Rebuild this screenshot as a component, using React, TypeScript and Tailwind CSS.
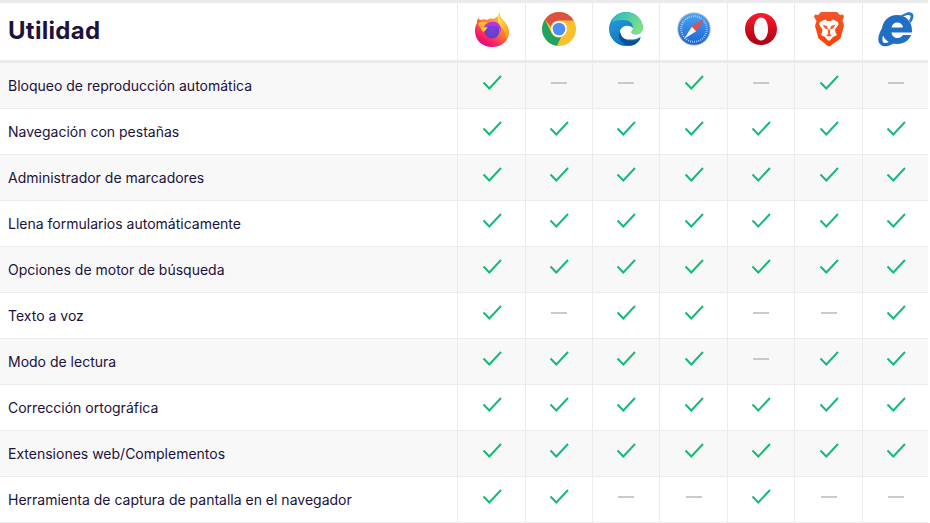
const features: [string, string][] = [
  ["Bloqueo de reproducción automática", "1001010"],
  ["Navegación con pestañas", "1111111"],
  ["Administrador de marcadores", "1111111"],
  ["Llena formularios automáticamente", "1111111"],
  ["Opciones de motor de búsqueda", "1111111"],
  ["Texto a voz", "1011001"],
  ["Modo de lectura", "1111011"],
  ["Corrección ortográfica", "1111111"],
  ["Extensiones web/Complementos", "1111111"],
  ["Herramienta de captura de pantalla en el navegador", "1100100"],
];

function Firefox() {
  return (
    <svg width="38" height="38" viewBox="0 0 38 38">
      <defs>
        <linearGradient id="ffBase" x1="0.8" y1="0.1" x2="0.2" y2="1">
          <stop offset="0" stopColor="#ffbd4f" />
          <stop offset="0.45" stopColor="#ff7139" />
          <stop offset="0.8" stopColor="#f5156c" />
          <stop offset="1" stopColor="#c5127f" />
        </linearGradient>
        <linearGradient id="ffTop" x1="0.3" y1="0" x2="0.7" y2="1">
          <stop offset="0" stopColor="#fff44f" />
          <stop offset="1" stopColor="#ff980e" />
        </linearGradient>
        <radialGradient id="ffBall" cx="0.55" cy="0.4" r="0.7">
          <stop offset="0" stopColor="#7a3fe0" />
          <stop offset="1" stopColor="#5a3ec0" />
        </radialGradient>
      </defs>
      <path d="M27 1c-1 3 0 6 3 9 3 3 6 7 6 12 0 9-7.500 15-17 15C9 37 2 30 2 21c0-3 .5-6 2-8 0-2 0-3 1.500-5 .5 1 1.500 2 2.500 2 2-1 4-1 6 0 1-1 4-2 6-1 3-1 6-3 7-8z" fill="url(#ffBase)" />
      <path d="M26 1c-1 5 1 7 4 10 3 3 5.500 7 5.500 11.500 0 3-1 5.500-2.500 7.500.5-5-1-9-4-12-3-3-6-7-3-17z" fill="url(#ffTop)" />
      <path d="M5 14c3-3 7-3 10-1-3 1-4 2-3 3l-3 3c-2-1-3-3-4-5z" fill="#ffb52e" />
      <circle cx="19" cy="21" r="7.500" fill="url(#ffBall)" />
      <path d="M11 17c2-4 7-6 11-5 4 1 7 5 6 10-1-4-4-6-7-6-3 0-7 0-10 1z" fill="#b833e1" />
      <path d="M8 18l7-1c-1 1-2 2-2 3l-3 2z" fill="#ffd23c" />
    </svg>
  );
}

function Chrome() {
  return (
    <svg width="34" height="34" viewBox="0 0 34 34">
      <circle cx="17" cy="17" r="17" fill="#fbc02d" />
      <path d="M17 0a17 17 0 0 1 14.700 8.500H17a8.500 8.500 0 0 0-8.200 6.300L2.900 7.500A17 17 0 0 1 17 0z" fill="#dd5044" />
      <path d="M2.900 7.500l6.700 13.800a8.500 8.500 0 0 0 9.400 4l-4 8.500A17 17 0 0 1 2.900 7.500z" fill="#1da462" />
      <circle cx="17" cy="17" r="8" fill="#fff" />
      <circle cx="17" cy="17" r="6.300" fill="#4e8df5" />
    </svg>
  );
}

function Edge() {
  return (
    <svg width="34" height="34" viewBox="0 0 34 34">
      <defs>
        <linearGradient id="edgeA" x1="0" y1="0" x2="0.6" y2="1">
          <stop offset="0" stopColor="#2aa5dc" />
          <stop offset="1" stopColor="#0b6cc0" />
        </linearGradient>
        <linearGradient id="edgeB" x1="0" y1="0" x2="1" y2="0.6">
          <stop offset="0" stopColor="#25b5cf" />
          <stop offset="1" stopColor="#7fe27f" />
        </linearGradient>
      </defs>
      <circle cx="17" cy="17" r="17" fill="url(#edgeA)" />
      <path d="M2.500 10C6 3.500 11 0 17 0c10 0 17 8 17 16.500 0 3.500-3 6-7 6-3 0-5-1.500-5-2.500 1-1 2-2.500 2-4 0-5-4-8-9-8-5 0-10 .5-12.500 2z" fill="url(#edgeB)" />
      <path d="M34 17c-.5 3-3.500 5.500-7 5.500-3 0-5-1.500-5-2.500 1-1 2-2.500 2-4-3-2.500-7-3-10-1-3 2-4 5-3 9 3 3 8 4 13 3.500 3-.3 5-1 6-2l6-1V17z" fill="#fff" />
      <path d="M11 19C8 25 12 32 20 33.500c5 1 9-2.500 11.500-7-3.500 2-7.500 2.500-11.500 2-5-.5-8.500-4.500-9-9.500z" fill="#0c4f96" />
    </svg>
  );
}

function Safari() {
  return (
    <svg width="34" height="34" viewBox="0 0 34 34">
      <defs>
        <linearGradient id="safBg" x1="0" y1="0" x2="0" y2="1">
          <stop offset="0" stopColor="#4ea4ee" />
          <stop offset="1" stopColor="#1a62d6" />
        </linearGradient>
      </defs>
      <circle cx="17" cy="17" r="16.800" fill="#c4c8d0" />
      <circle cx="17" cy="17" r="15.800" fill="url(#safBg)" />
      <circle cx="17" cy="17" r="12.800" fill="none" stroke="#b9dcf8" strokeWidth="2" strokeDasharray="0.800 1.300" />
      <path d="M27 6.500L14.800 14.800 19.200 19.200z" fill="#f0493e" />
      <path d="M7 27L14.800 14.800 19.200 19.200z" fill="#f2f2f2" />
    </svg>
  );
}

function Opera() {
  return (
    <svg width="34" height="34" viewBox="0 0 34 34">
      <defs>
        <linearGradient id="opA" x1="0" y1="0" x2="0" y2="1">
          <stop offset="0" stopColor="#ff1b2d" />
          <stop offset="1" stopColor="#a70014" />
        </linearGradient>
      </defs>
      <path fillRule="evenodd" d="M17 1C8 1 1 8 1 17c0 9 7 16 16 16 9 0 16-7 16-16C33 8 26 1 17 1zm0 4.500c4 0 7 5 7 11.500s-3 11.500-7 11.500S10 23.500 10 17s3-11.500 7-11.500z" fill="url(#opA)" />
    </svg>
  );
}

function Brave() {
  return (
    <svg width="32" height="36" viewBox="0 0 32 36">
      <defs>
        <linearGradient id="brA" x1="0" y1="0" x2="0" y2="1">
          <stop offset="0" stopColor="#f1562b" />
          <stop offset="1" stopColor="#ff4000" />
        </linearGradient>
      </defs>
      <path d="M8 1h16l3 3 3-.500 1 2-1.500 4 1.500 5-3.500 13L17 35l-1 .5-1-.5-9.500-7.500L2 15l1.500-5L1 6l1-2.500L5 4z" fill="url(#brA)" />
      <path d="M7 11l5-2.500 2.500 1.500h3L20 8.500l5 2.500.5 2.500-3.500 5 .5 3 1.500 2.500-4 2-3 3.500h-2l-3-3.500-4-2L9 21.500l.5-3-3.500-5z" fill="#fff" />
      <path d="M9.500 13.500l4.500 1.500 1 3.500-3-1zM22.500 13.500l-4.500 1.500-1 3.500 3-1z" fill="#ff5a1f" />
      <path d="M15 18.500v4.500l-2 1.500 3 1 3-1-2-1.500v-4.500z" fill="#ff5a1f" />
    </svg>
  );
}

function InternetExplorer() {
  return (
    <svg width="36" height="36" viewBox="0 0 36 36">
      <path fillRule="evenodd" d="M19 4c9 0 15 6.500 15 15.500 0 .8 0 1.500-.1 2H13.500c.3 3.500 3 5.500 6 5.500 2.500 0 4.200-1 5.500-3h8c-2 5.500-7 9-13.500 9C10 33 4 27 4 19S10 4 19 4zm-5.500 12.500h11.500c-.3-3-2.500-5-5.700-5s-5.300 2-5.800 5z" fill="#1f6fc4" />
      <path d="M29 1.500c4-1 6.500.5 6.500 3.500 0 2.500-1.500 5-3 7-.5-1-1-2-1.500-2.500 1.200-2 2-4 1.200-5-1-1.200-4-.5-7.700 1.200-1-.3-1.500-.5-2.500-.5 2.500-1.500 5-3 7-3.700z" fill="#2a78c8" />
      <path d="M6.500 13C2.500 19-.5 25 .5 30c.7 4 4.500 6 9 5 2.500-.5 5-1.800 7-3.200-1.500-.1-3-.5-4.500-1.200-2 1-4.500 1.800-6 1.200C3.500 31 4 25 7.500 18.500z" fill="#1f6fc4" />
    </svg>
  );
}

const browsers = [Firefox, Chrome, Edge, Safari, Opera, Brave, InternetExplorer];

function Check() {
  return (
    <svg width="20" height="15" viewBox="0 0 20 15" fill="none">
      <path d="M1.500 7.500L7.300 13.500 19 1" stroke="#17b978" strokeWidth="2" />
    </svg>
  );
}

function Dash() {
  return <div className="h-[2px] w-4 bg-[#c9c9d0]" />;
}

export default function App() {
  return (
    <div className="w-[928px] font-['Inter',sans-serif] text-[#20123a]">
      <div className="grid h-[60px] grid-cols-[457px_68px_67px_67px_68px_67px_68px_1fr] border-t-[3px] border-[#ebebee] bg-white">
        <h2 className="flex items-center pb-[1px] pl-2 text-2xl font-bold tracking-[0.3px]">Utilidad</h2>
        {browsers.map((Icon, i) => (
          <div key={i} className="flex items-center justify-center border-l border-[#ececee] pb-[5px]">
            <Icon />
          </div>
        ))}
      </div>
      <div className="border-t-[3px] border-[#ebebee]">
        {features.map(([label, marks], r) => (
          <div
            key={label}
            className={`grid h-[46px] grid-cols-[457px_68px_67px_67px_68px_67px_68px_1fr] border-b border-[#ececee] ${r % 2 === 0 ? "bg-[#f8f8f9]" : "bg-white"}`}
          >
            <div className="flex items-center pl-2 text-sm">{label}</div>
            {marks.split("").map((m, i) => (
              <div key={i} className="flex items-center justify-center border-l border-[#ececee] pb-[6px]">
                {m === "1" ? <Check /> : <Dash />}
              </div>
            ))}
          </div>
        ))}
      </div>
    </div>
  );
}
